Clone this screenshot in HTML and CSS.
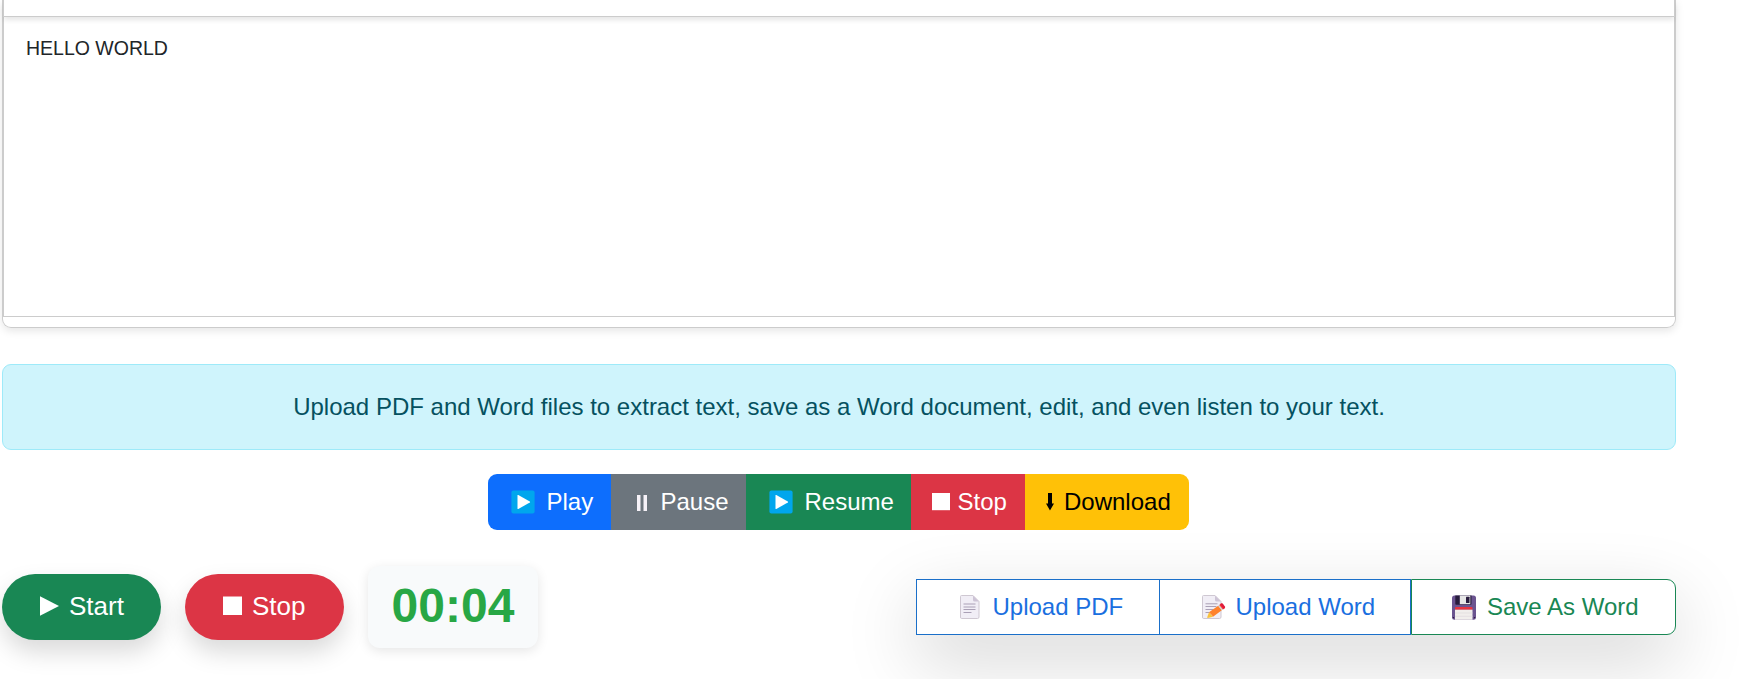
FILE: index.html
```html
<!DOCTYPE html>
<html lang="en">
<head>
<meta charset="utf-8">
<title>Text editor</title>
<link rel="stylesheet" href="styles.css">
</head>
<body>
<main class="page">
  <section class="editor">
    <div class="editor-toolbar"></div>
    <div class="editor-content">HELLO WORLD</div>
  </section>

  <div class="notice">Upload PDF and Word files to extract text, save as a Word document, edit, and even listen to your text.</div>

  <div class="player">
    <button class="btn play">
      <svg width="24" height="24" viewBox="0 0 24 24"><rect x=".4" y=".4" width="23.2" height="23.2" rx="2" fill="#00a6ed"/><path d="M6.500 5.500v13q0 .9.8.5l11.500-6.400q.8-.6 0-1.200L7.300 5Q6.500 4.600 6.500 5.500Z" fill="#fff"/></svg>
      <span>Play</span>
    </button>
    <button class="btn pause">
      <svg width="10" height="24" viewBox="0 0 10 24"><path d="M0 5h3.500v16H0zM6.500 5H10v16H6.500z" fill="#f6f2f8"/></svg>
      <span>Pause</span>
    </button>
    <button class="btn resume">
      <svg width="24" height="24" viewBox="0 0 24 24"><rect x=".4" y=".4" width="23.2" height="23.2" rx="2" fill="#00a6ed"/><path d="M6.500 5.500v13q0 .9.8.5l11.500-6.400q.8-.6 0-1.200L7.300 5Q6.500 4.600 6.500 5.500Z" fill="#fff"/></svg>
      <span>Resume</span>
    </button>
    <button class="btn stop">
      <svg width="18" height="24" viewBox="0 0 18 24"><path d="M0 3h18v17.200H0z" fill="#fff"/></svg>
      <span>Stop</span>
    </button>
    <button class="btn download">
      <svg width="8" height="24" viewBox="0 0 8 24"><path d="M2 3h4v10.500h2L4 20.500 0 13.500h2z" fill="#000"/></svg>
      <span>Download</span>
    </button>
  </div>

  <div class="footer">
    <div class="recorder">
      <button class="pill start">
        <svg width="19" height="20" viewBox="0 0 19 20"><path d="M0 .3 19 10 0 19.700Z" fill="#fff"/></svg>
        <span>Start</span>
      </button>
      <button class="pill halt">
        <svg width="19" height="20" viewBox="0 0 19 20"><path d="M0 .500h19v18.500H0z" fill="#fff"/></svg>
        <span>Stop</span>
      </button>
      <div class="timer">00:04</div>
    </div>
    <div class="files">
      <button class="btn file pdf">
        <svg width="20" height="24" viewBox="0 0 20 24"><path d="M1.500.5H13L19 6.500V22q0 1.500-1.500 1.500h-16Q.5 23.500.5 22V1.500Q.5.5 1.500.5Z" fill="#f1eef6" stroke="#cfc8d2"/><path d="M13 .500V5q0 1.500 1.500 1.500H19Z" fill="#cdc4d6"/><path d="M3.500 9h12M3.500 12h12M3.500 14.500h12M3.500 17.500h8" stroke="#aaa0b6" stroke-width="1"/></svg>
        <span>Upload PDF</span>
      </button>
      <button class="btn file word">
        <svg width="24" height="24" viewBox="0 0 24 24"><path d="M1.500.5H13L19 6.500V22q0 1.500-1.500 1.500h-16Q.5 23.500.5 22V1.500Q.5.5 1.500.5Z" fill="#f1eef6" stroke="#cfc8d2"/><path d="M13 .500V5q0 1.500 1.500 1.500H19Z" fill="#cdc4d6"/><path d="M3.500 8.800h12M3.500 11.500h11M3.500 14.500h8M3.500 17.500h4" stroke="#aaa0b6"/><path d="M7 17.300 5.200 22.300q0 .7.700.6L11 21.700Z" fill="#f9c23c"/><path d="M7 17.300 16.200 10.700 19.800 15.300 11 21.700Q9.500 19.600 7 17.300Z" fill="#ff822d"/><path d="M16.200 10.700 18 9.400 21.600 14l-1.800 1.300Z" fill="#d3d3d3"/><path d="m17.300 9.900 1.700-1.300q1-.7 1.800.2l2 2.700q.7 1-.2 1.700L21 14.400Z" fill="#f8312f"/><path d="m18.200 9.200.8-.6q1-.7 1.800.2l2 2.700q.7 1-.2 1.700l-.8.600Z" fill="#ca0b4a" opacity=".6"/></svg>
        <span>Upload Word</span>
      </button>
      <button class="btn file save">
        <svg width="24" height="25" viewBox="0 0 24 25"><path d="M2.500.5h19Q24 .5 24 3v19.500q0 2.300-2.500 2.300h-19Q0 24.800 0 22.500V3Q0 .5 2.500.5Z" fill="#6b5490"/><path d="M3.300.5h16.200v8.400q0 .8-.8.800H4.100q-.8 0-.8-.8Z" fill="#281c3d"/><path d="M7.800.5h10.500v8.700H7.800z" fill="#e6e6e6"/><rect x="14" y="1.700" width="3.500" height="6.300" rx=".5" fill="#281c3d"/><path d="M3 14.800V13q0-1 1-1h15.500q1 0 1 1v1.800Z" fill="#e8333e"/><path d="M3 14.700h17.500v10.100H3z" fill="#f1eeec"/><path d="M3 18h17.500M3 21.300h17.500" stroke="#dedadd" stroke-width=".7"/><path d="M.9 22.700h1.200M21.900 22.700h1.200" stroke="#321b41" stroke-width="1.300"/></svg>
        <span>Save As Word</span>
      </button>
    </div>
  </div>
</main>
</body>
</html>
```
FILE: styles.css
```css
* { box-sizing: border-box; }

html { overflow: hidden; }

body {
  margin: 0;
  height: 679px;
  overflow: hidden;
  background: #fff;
  color: #212529;
  font-family: "Liberation Sans", Arial, sans-serif;
  font-size: 24px;
}

.page {
  width: 1674px;
  margin-left: 2px;
}

.editor {
  height: 328px;
  padding-bottom: 10px;
  border: 1px solid #ccc;
  border-top: 0;
  border-radius: 0 0 9px 9px;
  box-shadow: 0 3px 9px rgba(0, 0, 0, .1);
}

.editor-toolbar {
  position: relative;
  height: 17px;
  border: 1px solid #ccc;
  border-top: 0;
  box-shadow: 0 4px 5px -1px rgba(0, 0, 0, .1);
}

.editor-content {
  height: 300px;
  padding: 19px 22px;
  border: 1px solid #ccc;
  border-top: 0;
  font-size: 19.5px;
  line-height: 24px;
}

.notice {
  display: flex;
  align-items: center;
  justify-content: center;
  height: 86px;
  margin-top: 36px;
  border: 1px solid #9eeaf9;
  border-radius: 9px;
  background: #cff4fc;
  color: #055160;
}

button {
  display: flex;
  align-items: center;
  margin: 0;
  border: 0;
  color: #fff;
  font: inherit;
  white-space: nowrap;
}

svg {
  display: block;
  flex: none;
}

.player {
  display: flex;
  width: 701px;
  height: 56px;
  margin: 24px 0 0 486px;
  border-radius: 9px;
  overflow: hidden;
}

.play { width: 123px; padding: 0 0 0 23px; gap: 11.500px; background: #0d6efd; }
.pause { width: 135px; padding: 0 0 0 26px; gap: 13.500px; background: #6c757d; }
.resume { width: 165px; padding: 0 0 0 23px; gap: 11.500px; background: #198754; }
.stop { width: 114px; padding: 0 0 0 20.500px; gap: 8px; background: #dc3545; }
.download { width: 164px; padding: 0 0 0 21px; gap: 10px; background: #ffc107; color: #000; }

.footer {
  display: flex;
  align-items: center;
  justify-content: space-between;
  height: 82px;
  margin-top: 36px;
}

.recorder {
  display: flex;
  align-items: center;
  gap: 24px;
}

.pill {
  width: 159px;
  height: 66px;
  padding: 0 0 2px 38px;
  gap: 10px;
  border-radius: 33px;
  font-size: 26px;
  box-shadow: 0 12px 24px rgba(0, 0, 0, .15);
}

.start { background: #198754; }
.halt { background: #dc3545; }

.timer {
  width: 170px;
  height: 82px;
  border-radius: 12px;
  background: #f8fafb;
  color: #28a745;
  font-size: 48px;
  font-weight: bold;
  line-height: 80px;
  text-align: center;
  box-shadow: 0 3px 12px rgba(0, 0, 0, .1);
}

.files {
  display: flex;
  height: 56px;
  border-radius: 0 9px 9px 0;
  box-shadow: 0 24px 72px rgba(0, 0, 0, .175);
}

.file {
  border: 1px solid #0d6efd;
  background: #fff;
}

.pdf { width: 244px; padding: 0 0 0 42.500px; gap: 13px; border-color: #1a6fc9; color: #1a6fe0; }
.word { width: 251px; padding: 0 0 0 42px; gap: 9.500px; border-color: #1a6fc9; border-left: 0; color: #1a6fe0; }
.save { width: 265px; padding: 0 0 0 40px; gap: 11px; border-color: #198754; border-radius: 0 9px 9px 0; color: #198754; }
```
